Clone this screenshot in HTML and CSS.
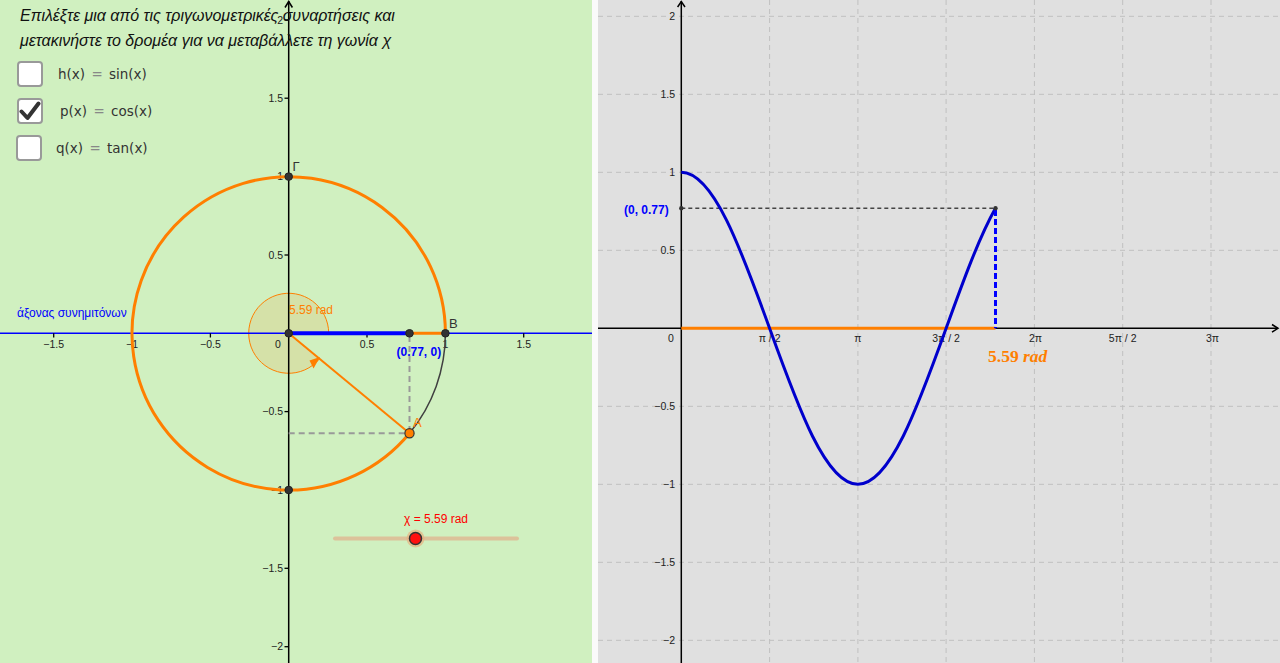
FILE: index.html
```html
<!DOCTYPE html>
<html lang="el">
<head>
<meta charset="utf-8">
<title>Τριγωνομετρικές συναρτήσεις</title>
<link rel="stylesheet" href="styles.css">
</head>
<body>
<div class="app">
  <section class="panel panel-circle">
    <svg class="canvas" width="592" height="663" viewBox="0 0 592 663" xmlns="http://www.w3.org/2000/svg">
      <!-- sector -->
      <path class="sector" d="M288.7 333.3 L328.7 333.3 A40 40 0 1 0 319.5 358.8 Z"/>
      <polygon class="orange-fill" points="320,357 309.5,360.5 313.5,368.5"/>
      <!-- axes -->
      <line class="axis-x" x1="0" y1="333.3" x2="592" y2="333.3"/>
      <line class="axis" x1="288.7" y1="1" x2="288.7" y2="663"/>
      <polyline class="axis" points="285,7.5 288.7,1.5 292.4,7.5"/>
      <!-- ticks x -->
      <g class="tick">
        <line x1="53.7" y1="333.3" x2="53.7" y2="337.5"/>
        <line x1="132" y1="333.3" x2="132" y2="337.5"/>
        <line x1="210.4" y1="333.3" x2="210.4" y2="337.5"/>
        <line x1="367" y1="333.3" x2="367" y2="337.5"/>
        <line x1="445.4" y1="333.3" x2="445.4" y2="337.5"/>
        <line x1="523.7" y1="333.3" x2="523.7" y2="337.5"/>
        <line x1="284.5" y1="19.9" x2="288.7" y2="19.9"/>
        <line x1="284.5" y1="98.2" x2="288.7" y2="98.2"/>
        <line x1="284.5" y1="176.6" x2="288.7" y2="176.6"/>
        <line x1="284.5" y1="255" x2="288.7" y2="255"/>
        <line x1="284.5" y1="411.6" x2="288.7" y2="411.6"/>
        <line x1="284.5" y1="490" x2="288.7" y2="490"/>
        <line x1="284.5" y1="568.3" x2="288.7" y2="568.3"/>
        <line x1="284.5" y1="646.7" x2="288.7" y2="646.7"/>
      </g>
      <g class="ticklabel mid">
        <text x="53.7" y="347.5">−1.5</text>
        <text x="132" y="347.5">−1</text>
        <text x="210.4" y="347.5">−0.5</text>
        <text x="278" y="347.5">0</text>
        <text x="367" y="347.5">0.5</text>
        <text x="445.4" y="347.5">1</text>
        <text x="523.7" y="347.5">1.5</text>
      </g>
      <g class="ticklabel end">
        <text x="283" y="23.5">2</text>
        <text x="283" y="101.8">1.5</text>
        <text x="283" y="180.2">1</text>
        <text x="283" y="258.6">0.5</text>
        <text x="283" y="415.2">−0.5</text>
        <text x="283" y="493.6">−1</text>
        <text x="283" y="571.9">−1.5</text>
        <text x="283" y="650.3">−2</text>
      </g>
      <!-- circle -->
      <path class="circle" d="M445.4 333.3 A156.7 156.7 0 1 0 409.5 433.2"/>
      <path class="arc-rest" d="M409.5 433.2 A156.7 156.7 0 0 0 445.4 333.3"/>
      <!-- dashed projections -->
      <line class="proj" x1="409.5" y1="336" x2="409.5" y2="433.2"/>
      <line class="proj" x1="288.7" y1="433.2" x2="406" y2="433.2"/>
      <!-- segments -->
      <line class="seg-orange" x1="409.5" y1="333.3" x2="445.4" y2="333.3"/>
      <line class="seg-blue" x1="288.7" y1="333.3" x2="409.5" y2="333.3"/>
      <line class="ray" x1="288.7" y1="333.3" x2="409.5" y2="433.2"/>
      <!-- points -->
      <g class="pt">
        <circle cx="288.7" cy="333.3" r="3.8"/>
        <circle cx="409.5" cy="333.3" r="3.8"/>
        <circle cx="445.4" cy="333.3" r="3.8"/>
        <circle cx="288.7" cy="176.6" r="3.8"/>
        <circle cx="288.7" cy="490" r="3.8"/>
      </g>
      <circle class="pt-a" cx="409.5" cy="433.2" r="4.6"/>
      <!-- labels -->
      <text class="lbl" x="449" y="328">B</text>
      <text class="lbl" x="292.5" y="171">Γ</text>
      <text class="lbl orange" x="413" y="427">A</text>
      <text class="lbl orange small" x="289" y="313.5">5.59 rad</text>
      <text class="lbl blue bold small" x="396.5" y="356">(0.77, 0)</text>
      <text class="lbl blue axisname" x="17" y="317">άξονας συνημιτόνων</text>
      <!-- slider -->
      <text class="lbl red small" x="404" y="523">χ = 5.59 rad</text>
      <line class="slider-track" x1="335" y1="538.5" x2="517" y2="538.5"/>
      <circle class="slider-halo" cx="415.5" cy="538.5" r="9"/>
      <circle class="slider-knob" cx="415.5" cy="538.5" r="6"/>
    </svg>

    <p class="prompt">Επιλέξτε μια από τις τριγωνομετρικές συναρτήσεις και<br>μετακινήστε το δρομέα για να μεταβάλλετε τη γωνία χ</p>

    <ul class="checks">
      <li class="check-row">
        <span class="box"></span>
        <span class="fn">h(x) <span class="eq">=</span> sin(x)</span>
      </li>
      <li class="check-row check-row--p">
        <span class="box">
          <svg width="22" height="22" viewBox="0 0 22 22"><path d="M2.5 11.5 L8.5 18 L19.5 3.5" fill="none" stroke="#333" stroke-width="4" stroke-linecap="round" stroke-linejoin="round"/></svg>
        </span>
        <span class="fn">p(x) <span class="eq">=</span> cos(x)</span>
      </li>
      <li class="check-row check-row--q">
        <span class="box"></span>
        <span class="fn">q(x) <span class="eq">=</span> tan(x)</span>
      </li>
    </ul>
  </section>

  <div class="divider"></div>

  <section class="panel panel-graph">
    <svg class="canvas" width="682" height="663" viewBox="598 0 682 663" xmlns="http://www.w3.org/2000/svg">
      <g class="grid">
        <line x1="598" y1="16.3" x2="1280" y2="16.3"/>
        <line x1="598" y1="94.3" x2="1280" y2="94.3"/>
        <line x1="598" y1="172.3" x2="1280" y2="172.3"/>
        <line x1="598" y1="250.3" x2="1280" y2="250.3"/>
        <line x1="598" y1="406.3" x2="1280" y2="406.3"/>
        <line x1="598" y1="484.3" x2="1280" y2="484.3"/>
        <line x1="598" y1="562.3" x2="1280" y2="562.3"/>
        <line x1="598" y1="640.3" x2="1280" y2="640.3"/>
        <line x1="769.6" y1="0" x2="769.6" y2="663"/>
        <line x1="857.9" y1="0" x2="857.9" y2="663"/>
        <line x1="946.1" y1="0" x2="946.1" y2="663"/>
        <line x1="1034.4" y1="0" x2="1034.4" y2="663"/>
        <line x1="1122.7" y1="0" x2="1122.7" y2="663"/>
        <line x1="1211" y1="0" x2="1211" y2="663"/>
      </g>
      <line class="axis" x1="598" y1="328.3" x2="1278" y2="328.3"/>
      <polyline class="axis" points="1272,324.5 1278,328.3 1272,332.1"/>
      <line class="axis" x1="681.3" y1="1" x2="681.3" y2="663"/>
      <polyline class="axis" points="677.6,7 681.3,1.5 685,7"/>
      <g class="ticklabel end">
        <text x="675" y="20">2</text>
        <text x="675" y="98">1.5</text>
        <text x="675" y="176">1</text>
        <text x="675" y="254">0.5</text>
        <text x="675" y="410">−0.5</text>
        <text x="675" y="488">−1</text>
        <text x="675" y="566">−1.5</text>
        <text x="675" y="644">−2</text>
      </g>
      <g class="ticklabel mid">
        <text x="671" y="342">0</text>
        <text x="769.6" y="342">π / 2</text>
        <text x="857.9" y="342">π</text>
        <text x="946.1" y="342">3π / 2</text>
        <text x="1035.5" y="342">2π</text>
        <text x="1122.7" y="342">5π / 2</text>
        <text x="1212.5" y="342">3π</text>
      </g>
      <line class="dash-dark" x1="681.3" y1="208.3" x2="995.5" y2="208.3"/>
      <line class="seg-orange" x1="681.3" y1="328.3" x2="995.5" y2="328.3"/>
      <path class="curve" d="M681.3 172.3 C713.25 172.3 740.79 248.38 769.58 328.3 C798.37 408.22 825.91 484.3 857.86 484.3 C889.81 484.3 917.35 408.22 946.14 328.3 C962.58 282.67 979.02 237.43 995.46 208.27"/>
      <line class="dash-blue" x1="995.5" y1="210" x2="995.5" y2="328.3"/>
      <circle class="pt-small" cx="995.5" cy="208.3" r="2.2"/>
      <circle class="pt-small" cx="681.3" cy="208.3" r="2.2"/>
      <text class="lbl blue bold small" x="624" y="213.5">(0, 0.77)</text>
      <text class="rad-label" x="988" y="361.5">5.59 <tspan class="rad-it">rad</tspan></text>
    </svg>
  </section>
</div>
</body>
</html>
```

FILE: styles.css
```css
* { box-sizing: border-box; }
html, body { margin: 0; padding: 0; }
body {
  width: 1280px;
  height: 663px;
  overflow: hidden;
  font-family: "Liberation Sans", Arial, sans-serif;
  background: #ffffff;
}
.app {
  display: flex;
  width: 1280px;
  height: 663px;
}
.panel {
  position: relative;
  height: 663px;
  overflow: hidden;
}
.panel-circle {
  width: 592px;
  background: #d0f0c0;
}
.divider {
  width: 6px;
  background: #fafafa;
}
.panel-graph {
  flex: 1;
  background: #e0e0e0;
}
.canvas {
  position: absolute;
  left: 0;
  top: 0;
  display: block;
}
.prompt {
  position: relative;
  margin: 0;
  padding: 3px 0 0 20px;
  font-style: italic;
  font-size: 16px;
  line-height: 25px;
  color: #111;
}
.checks {
  position: relative;
  list-style: none;
  margin: 8px 0 0 0;
  padding: 0 0 0 17px;
  display: flex;
  flex-direction: column;
  gap: 11px;
}
.check-row {
  display: flex;
  align-items: center;
  gap: 15px;
  height: 26px;
}
.check-row--p { gap: 17px; }
.check-row--q { gap: 14px; margin-left: -1px; }
.box {
  width: 26px;
  height: 26px;
  background: #fff;
  border: 2px solid #999;
  border-radius: 4px;
  display: flex;
  align-items: center;
  justify-content: center;
}
.fn {
  font-family: "DejaVu Sans", sans-serif;
  font-size: 13.5px;
  color: #333;
  word-spacing: 2px;
}
.eq { color: #888; }

/* svg styles */
.axis { stroke: #000; stroke-width: 1.5; fill: none; }
.axis-x { stroke: #0000ff; stroke-width: 1.5; }
.tick line { stroke: #000; stroke-width: 1.3; }
.ticklabel text {
  font-family: "Liberation Sans", Arial, sans-serif;
  font-size: 10.5px;
  fill: #222;
}
.ticklabel.mid text { text-anchor: middle; }
.ticklabel.end text { text-anchor: end; }
.sector { fill: #ff7f00; fill-opacity: 0.12; stroke: #ff7f00; stroke-width: 1; }
.orange-fill { fill: #ff7f00; }
.circle { fill: none; stroke: #ff7f00; stroke-width: 3; }
.arc-rest { fill: none; stroke: #404040; stroke-width: 1.5; }
.proj { stroke: #999; stroke-width: 2; stroke-dasharray: 6 4; }
.seg-orange { stroke: #ff7f00; stroke-width: 3; }
.seg-blue { stroke: #0000ff; stroke-width: 4; }
.ray { stroke: #ff7f00; stroke-width: 2; }
.pt circle { fill: #333; stroke: #222; stroke-width: 1; }
.pt-a { fill: #ff7f00; stroke: #333; stroke-width: 1.2; }
.pt-small { fill: #333; }
.lbl {
  font-family: "Liberation Sans", Arial, sans-serif;
  font-size: 13px;
  fill: #333;
}
.lbl.small { font-size: 12px; }
.lbl.orange { fill: #ff7f00; }
.lbl.blue { fill: #0000ff; }
.lbl.red { fill: #ff0000; }
.lbl.bold { font-weight: bold; }
.lbl.axisname { font-size: 12px; }
.slider-track { stroke: #dcc29a; stroke-width: 4; stroke-linecap: round; }
.slider-halo { fill: #e8b080; fill-opacity: 0.7; }
.slider-knob { fill: #ff1010; stroke: #333; stroke-width: 1.5; }
.grid line { stroke: #c0c0c0; stroke-width: 1; stroke-dasharray: 5 4; }
.dash-dark { stroke: #444; stroke-width: 1.5; stroke-dasharray: 4 3; }
.dash-blue { stroke: #0000ff; stroke-width: 3; stroke-dasharray: 6 3; }
.curve { fill: none; stroke: #0000cc; stroke-width: 3; }
.rad-label {
  font-family: "Liberation Serif", "Times New Roman", serif;
  font-weight: bold;
  font-size: 17.5px;
  fill: #ff7f00;
}
.rad-it { font-style: italic; }
```
